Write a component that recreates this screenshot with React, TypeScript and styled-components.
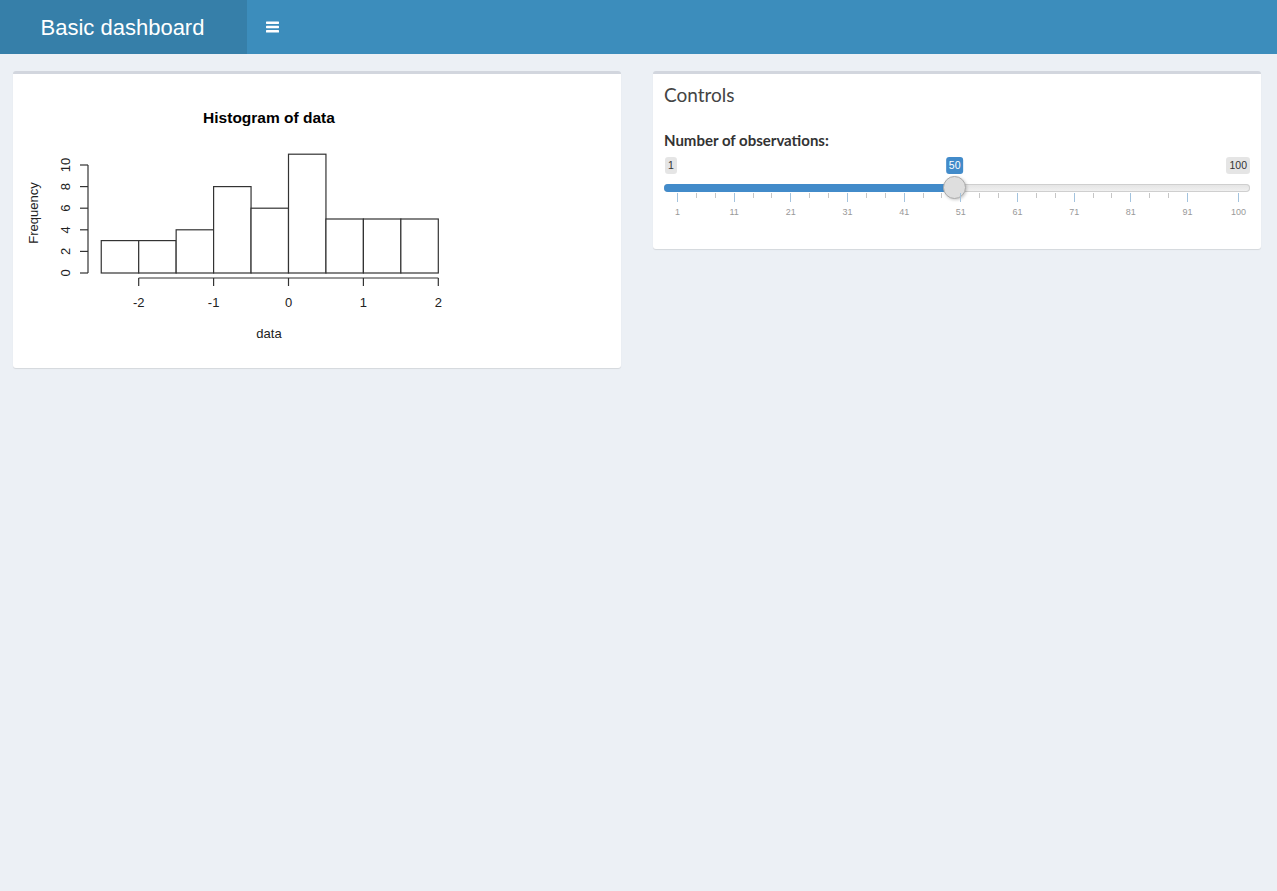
import React from 'react';
import styled, { createGlobalStyle } from 'styled-components';

const GlobalStyle = createGlobalStyle`
	html, body {
		margin: 0;
		padding: 0;
		background: #ecf0f5;
		font-family: Lato, "Open Sans", sans-serif;
		color: #333;
	}
`;

const Page = styled.div({
	minHeight: '891px',
	backgroundColor: '#ecf0f5'
});

const Header = styled.header({
	display: 'flex',
	height: '54px',
	backgroundColor: '#3c8dbc'
});

const Logo = styled.div({
	width: '247px',
	display: 'flex',
	alignItems: 'center',
	justifyContent: 'center',
	backgroundColor: '#367fa9',
	color: 'white',
	fontFamily: '"Liberation Sans", Arial, sans-serif',
	fontSize: '22px',
	paddingTop: '1px',
	paddingRight: '2px',
	boxSizing: 'border-box'
});

const Toggle = styled.div({
	width: '46px',
	display: 'flex',
	alignItems: 'center',
	justifyContent: 'center',
	paddingLeft: '2px'
});

const Content = styled.main({
	display: 'grid',
	gridTemplateColumns: '1fr 1fr',
	columnGap: '32px',
	alignItems: 'start',
	padding: '17px 16px 0 13px'
});

const Box = styled.section({
	backgroundColor: 'white',
	borderTop: '3px solid #d2d6de',
	borderRadius: '3px',
	boxShadow: '0 1px 1px rgba(0,0,0,0.1)'
});

const BoxHeader = styled.div({
	padding: '11px 11px',
	'> h3': {
		margin: 0,
		fontSize: '19px',
		fontWeight: 400,
		lineHeight: '20px',
		color: '#444'
	}
});

const BoxBody = styled.div<{ $form?: boolean }>`
	padding: ${p => (p.$form ? '14px 11px 27px' : '11px')};
`;

const Label = styled.label({
	display: 'block',
	fontWeight: 700,
	fontSize: '15px',
	lineHeight: '21px',
	marginBottom: '4px'
});

const Slider = styled.div({
	display: 'flex',
	flexDirection: 'column',
	fontFamily: '"Liberation Sans", Arial, sans-serif'
});

const BubbleRow = styled.div({
	position: 'relative',
	display: 'flex',
	justifyContent: 'space-between',
	alignItems: 'flex-start',
	height: '17px',
	marginTop: '2px',
	padding: '0 0 0 1px'
});

const Bubble = styled.span<{ $active?: boolean }>`
	padding: 1px 3px;
	font-size: 10.5px;
	line-height: 15px;
	border-radius: 3px;
	color: ${p => (p.$active ? 'white' : '#333')};
	background: ${p => (p.$active ? '#428bca' : 'rgba(0,0,0,0.1)')};
`;

const ValueBubble = styled(Bubble)({
	position: 'absolute',
	top: 0,
	transform: 'translateX(-50%)'
});

const Track = styled.div({
	position: 'relative',
	height: '8px',
	marginTop: '10px',
	borderRadius: '5px',
	background: 'linear-gradient(#e3e3e3, #f2f2f2)',
	boxShadow: 'inset 0 0 0 1px #cfcfcf'
});

const Fill = styled.div({
	height: '100%',
	borderRadius: '5px 0 0 5px',
	backgroundColor: '#428bca'
});

const Handle = styled.div({
	position: 'absolute',
	top: '-8px',
	width: '23px',
	height: '23px',
	marginLeft: '-12px',
	borderRadius: '50%',
	backgroundColor: '#dedede',
	border: '1px solid #ababab',
	boxShadow: '1px 1px 3px rgba(0,0,0,0.2)',
	boxSizing: 'border-box'
});

const Grid = styled.div({
	position: 'relative',
	height: '29px',
	marginTop: '1px'
});

const Tick = styled.div<{ $major?: boolean }>`
	position: absolute;
	top: 0;
	width: 1px;
	height: ${p => (p.$major ? '9px' : '5px')};
	background: ${p => (p.$major ? '#a3c3de' : '#c6c6c6')};
`;

const TickLabel = styled.span({
	position: 'absolute',
	top: '14px',
	fontSize: '9px',
	color: '#999',
	transform: 'translateX(-50%)'
});

const MIN = 1;
const MAX = 100;
const VALUE = 50;
const START = 13;
const RANGE = 561;

const pos = (v: number) => START + ((v - MIN) / (MAX - MIN)) * RANGE;

const majors = [1, 11, 21, 31, 41, 51, 61, 71, 81, 91, 100];
const minors: number[] = [];
for (let i = 0; i < 9; i++) {
	minors.push(majors[i] + 10 / 3, majors[i] + 20 / 3);
}

const ObservationSlider = () => (
	<Slider>
		<BubbleRow>
			<Bubble>{MIN}</Bubble>
			<Bubble>{MAX}</Bubble>
			<ValueBubble $active style={{ left: pos(VALUE) }}>{VALUE}</ValueBubble>
		</BubbleRow>
		<Track>
			<Fill style={{ width: pos(VALUE) }} />
			<Handle style={{ left: pos(VALUE) }} />
		</Track>
		<Grid>
			{minors.map(v => <Tick key={`m${v}`} style={{ left: pos(v) }} />)}
			{majors.map(v => <Tick key={v} $major style={{ left: pos(v) }} />)}
			{majors.map(v => <TickLabel key={`l${v}`} style={{ left: pos(v) + 0.5 }}>{v}</TickLabel>)}
		</Grid>
	</Slider>
);

const counts = [3, 3, 4, 8, 6, 11, 5, 5, 5];
const xs = (v: number) => 138.7 + (v + 2) * 74.9;
const ys = (f: number) => 273 - f * 10.8;

const Histogram = () => (
	<svg width={584} height={272} viewBox="24 85 584 272" style={{ display: 'block' }}
		fontFamily='"Liberation Sans", Arial, sans-serif' fill="#000">
		<text x={269} y={123} textAnchor="middle" fontWeight="bold" fontSize={15.5}>Histogram of data</text>
		<g fill="white" stroke="#333" strokeWidth={1.2}>
			{counts.map((c, i) => {
				const x0 = xs(-2.5 + i * 0.5);
				return <rect key={i} x={x0} y={ys(c)} width={xs(-2 + i * 0.5) - x0} height={c * 10.8} />;
			})}
		</g>
		<g stroke="#333" strokeWidth={1.2}>
			<line x1={88} y1={ys(0)} x2={88} y2={ys(10)} />
			{[0, 2, 4, 6, 8, 10].map(f => <line key={f} x1={80} y1={ys(f)} x2={88} y2={ys(f)} />)}
			<line x1={xs(-2)} y1={278} x2={xs(2)} y2={278} />
			{[-2, -1, 0, 1, 2].map(v => <line key={v} x1={xs(v)} y1={278} x2={xs(v)} y2={286} />)}
		</g>
		<g fontSize={13} fill="#222">
			{[0, 2, 4, 6, 8, 10].map(f => (
				<text key={f} textAnchor="middle" transform={`translate(70 ${ys(f)}) rotate(-90)`}>{f}</text>
			))}
			{[-2, -1, 0, 1, 2].map(v => (
				<text key={v} x={xs(v)} y={307} textAnchor="middle">{v}</text>
			))}
			<text x={269} y={338} textAnchor="middle">data</text>
			<text textAnchor="middle" transform="translate(38 213) rotate(-90)">Frequency</text>
		</g>
	</svg>
);

const MenuIcon = () => (
	<svg width={13} height={12} viewBox="0 0 13 12">
		<g fill="white">
			<rect x={0} y={0.5} width={13} height={2.4} rx={0.6} />
			<rect x={0} y={4.8} width={13} height={2.4} rx={0.6} />
			<rect x={0} y={9.1} width={13} height={2.4} rx={0.6} />
		</g>
	</svg>
);

export default function App() {
	return (
		<Page>
			<GlobalStyle />
			<Header>
				<Logo>Basic dashboard</Logo>
				<Toggle><MenuIcon /></Toggle>
			</Header>
			<Content>
				<Box>
					<BoxBody>
						<Histogram />
					</BoxBody>
				</Box>
				<Box>
					<BoxHeader>
						<h3>Controls</h3>
					</BoxHeader>
					<BoxBody $form>
						<Label>Number of observations:</Label>
						<ObservationSlider />
					</BoxBody>
				</Box>
			</Content>
		</Page>
	);
}
